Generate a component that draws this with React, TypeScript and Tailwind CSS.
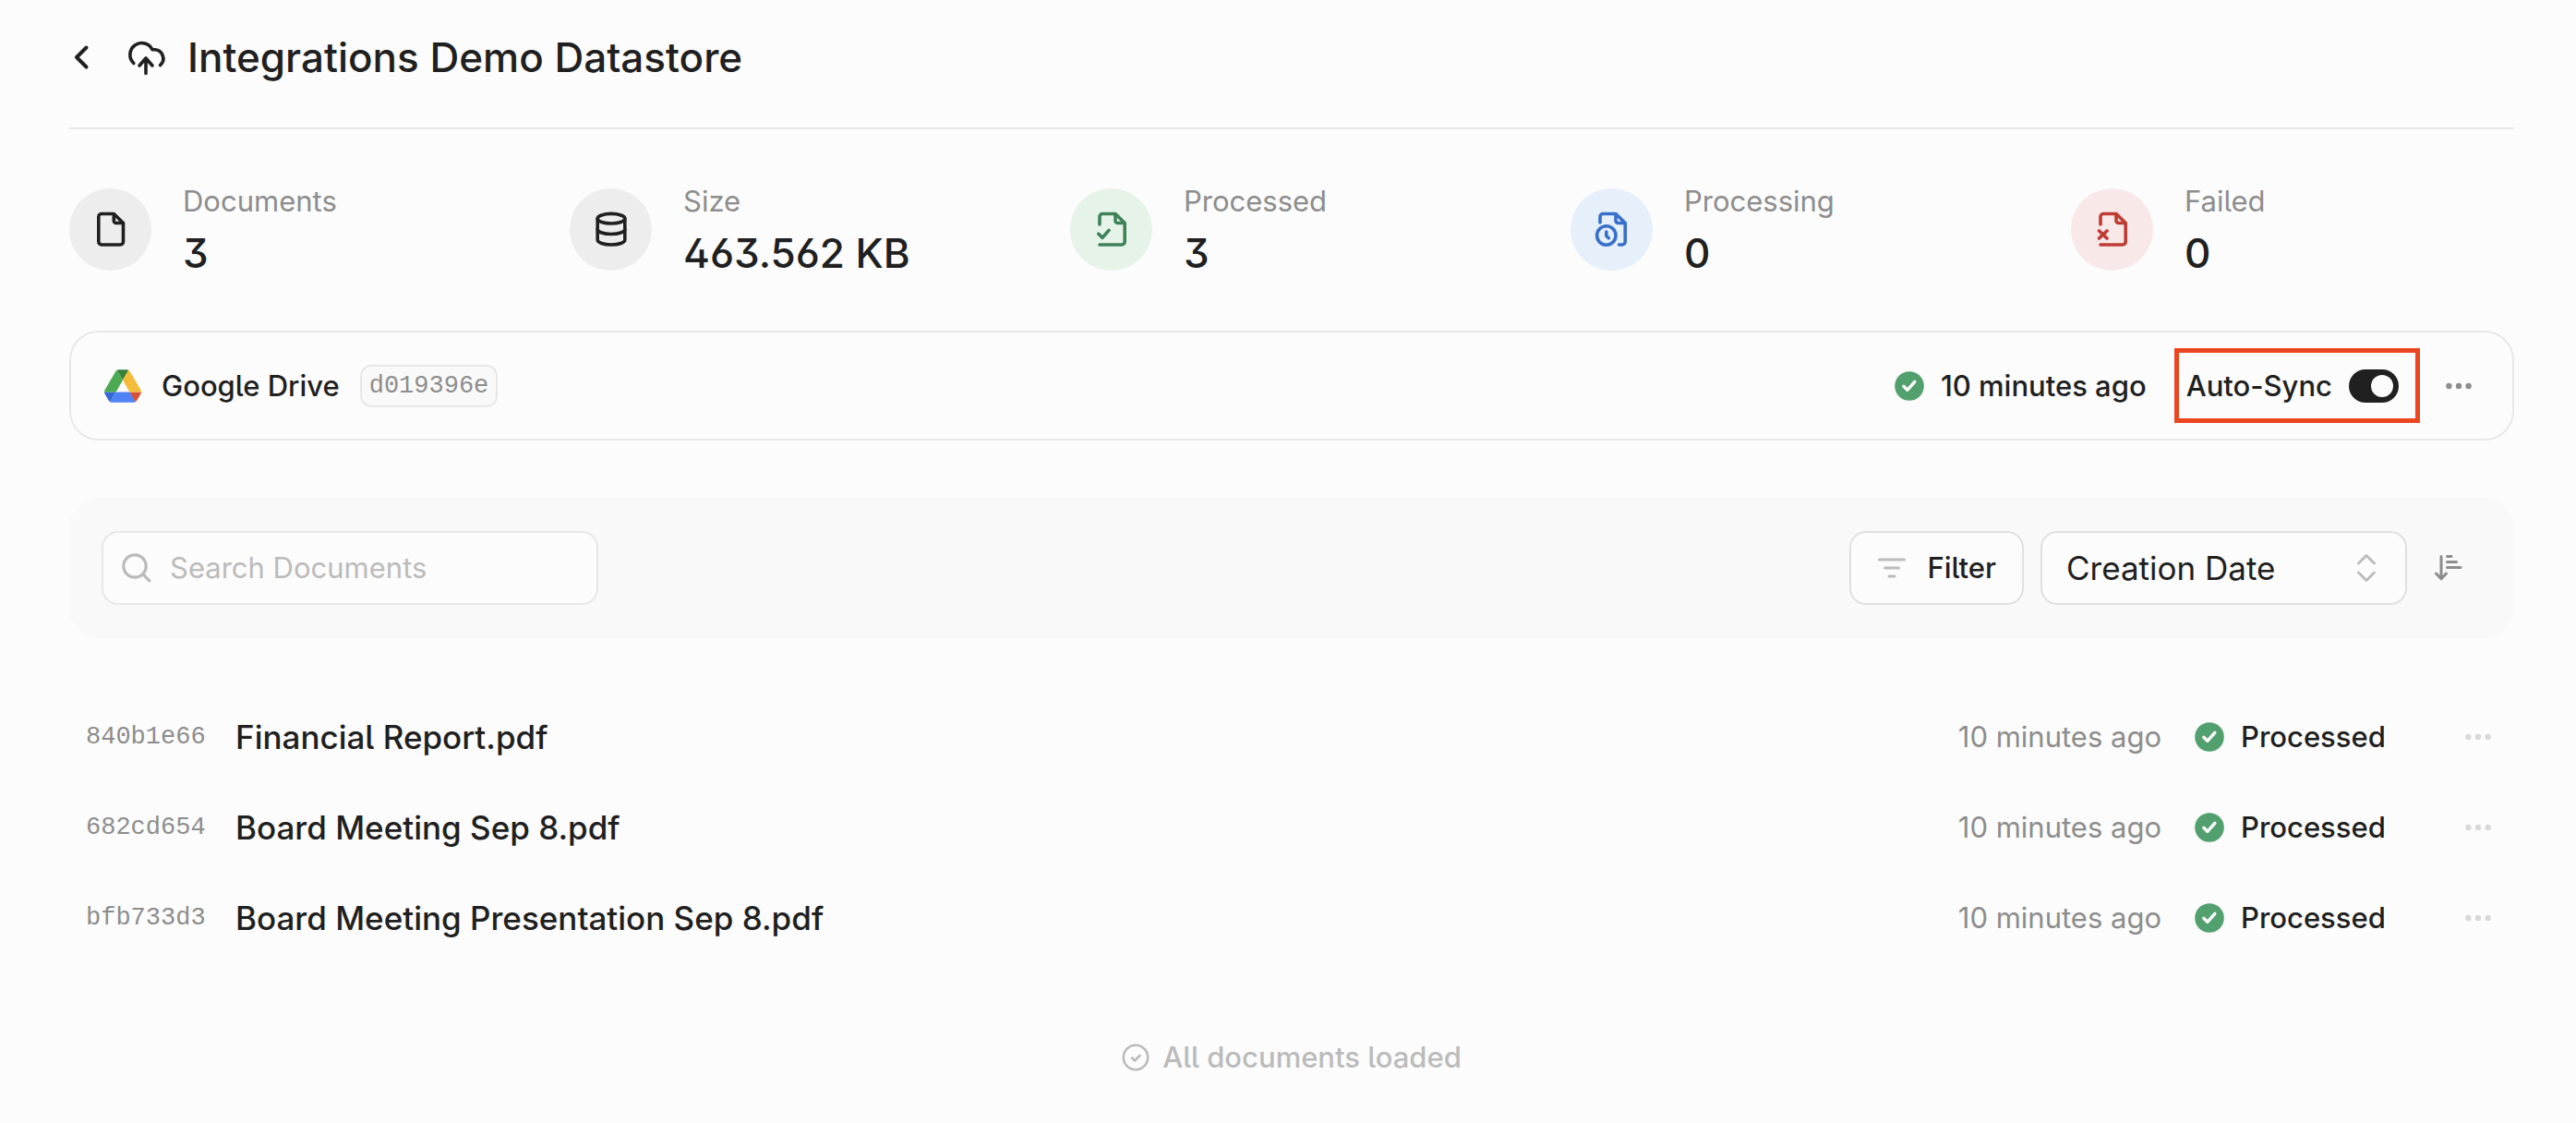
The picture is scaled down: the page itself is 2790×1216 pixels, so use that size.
import React, { useState } from 'react';

type IconProps = { className?: string };

const stats = [
  { name: 'Documents', value: '3', icon: FileIcon, style: 'bg-[#ededed] text-[#202020]' },
  { name: 'Size', value: '463.562 KB', icon: DatabaseIcon, style: 'bg-[#ededed] text-[#202020]' },
  { name: 'Processed', value: '3', icon: FileCheckIcon, style: 'bg-[#e6f3e9] text-[#3f825a]' },
  { name: 'Processing', value: '0', icon: FileClockIcon, style: 'bg-[#e5f0fb] text-[#3a70cc]' },
  { name: 'Failed', value: '0', icon: FileXIcon, style: 'bg-[#f8e8e8] text-[#bf3c35]' },
];

const documents = [
  { id: '840b1e66', name: 'Financial Report.pdf', time: '10 minutes ago', status: 'Processed' },
  { id: '682cd654', name: 'Board Meeting Sep 8.pdf', time: '10 minutes ago', status: 'Processed' },
  { id: 'bfb733d3', name: 'Board Meeting Presentation Sep 8.pdf', time: '10 minutes ago', status: 'Processed' },
];

// Shared wrapper for the 44px outline icons
function Outline({ children }: { children: React.ReactNode }) {
  return (
    <svg
      viewBox="0 0 44 44"
      className="size-11 shrink-0"
      fill="none"
      stroke="currentColor"
      strokeWidth="3.6"
      strokeLinecap="round"
      strokeLinejoin="round"
      aria-hidden="true"
    >
      {children}
    </svg>
  );
}

function FileIcon() {
  return (
    <Outline>
      <path d="M25.3 5.5H12a3.2 3.2 0 0 0-3.2 3.2v27.1A3.2 3.2 0 0 0 12 39h20.300a3.200 3.200 0 0 0 3.200-3.200V15.500z" />
      <path d="M25.300 6v7a2.500 2.500 0 0 0 2.500 2.500h7" />
    </Outline>
  );
}

function DatabaseIcon() {
  return (
    <Outline>
      <ellipse cx="22" cy="10.700" rx="14.800" ry="5.300" />
      <path d="M7.200 10.700v23c0 2.900 6.600 5.300 14.800 5.300s14.800-2.400 14.800-5.300v-23" />
      <path d="M7.200 22.200c0 2.900 6.600 5.300 14.800 5.300s14.800-2.400 14.800-5.300" />
    </Outline>
  );
}

function FileCheckIcon() {
  return (
    <Outline>
      <path d="M9 17V8.700a3.200 3.200 0 0 1 3.200-3.200H26l10.200 10v20.300A3.200 3.200 0 0 1 33 39H9" />
      <path d="M26 6v7a2.500 2.500 0 0 0 2.500 2.500h7" />
      <path d="M7.800 27.200l4.200 4.200 7-8" />
    </Outline>
  );
}

function FileClockIcon() {
  return (
    <Outline>
      <path d="M9 15V8.700a3.200 3.200 0 0 1 3.200-3.200H26l10.200 10v20.300A3.200 3.200 0 0 1 33 39h-3.500" />
      <path d="M26 6v7a2.500 2.500 0 0 0 2.500 2.500h7" />
      <circle cx="15.800" cy="29" r="10.200" />
      <path d="M15.800 25v4.500l2.500 2.300" />
    </Outline>
  );
}

function FileXIcon() {
  return (
    <Outline>
      <path d="M9 17V8.700a3.200 3.200 0 0 1 3.200-3.200H26l10.200 10v20.300A3.200 3.200 0 0 1 33 39H9" />
      <path d="M26 6v7a2.500 2.500 0 0 0 2.500 2.500h7" />
      <path d="M7.500 24l8.500 8M16 24l-8.500 8" />
    </Outline>
  );
}

function CloudUploadIcon() {
  return (
    <Outline>
      <path d="M7.800 28.500A12.700 12.700 0 1 1 28 13.800h1.500a9.600 9.600 0 0 1 7 16.800" />
      <path d="M21 23v16.500M14 31l7-8 7 8" />
    </Outline>
  );
}

function DriveLogo() {
  return (
    <svg viewBox="0 0 87.3 78" className="h-9 w-10 shrink-0" aria-hidden="true">
      <path fill="#3667d6" d="m6.600 66.850 3.850 6.650c.8 1.400 1.950 2.500 3.300 3.300l13.750-23.800h-27.500c0 1.550.4 3.100 1.200 4.500z" />
      <path fill="#4caa53" d="m43.650 25-13.750-23.800c-1.350.8-2.500 1.900-3.300 3.300l-25.400 44a9.060 9.060 0 0 0 -1.200 4.500h27.500z" />
      <path fill="#d8523a" d="m73.550 76.800c1.350-.8 2.500-1.900 3.300-3.300l1.600-2.750 7.650-13.250c.8-1.400 1.200-2.950 1.200-4.500h-27.502l5.852 11.500z" />
      <path fill="#38803a" d="m43.650 25 13.750-23.800c-1.350-.8-2.900-1.200-4.500-1.200h-18.500c-1.600 0-3.150.45-4.500 1.200z" />
      <path fill="#4f82f5" d="m59.800 53h-32.300l-13.750 23.800c1.350.8 2.900 1.200 4.500 1.200h50.800c1.600 0 3.150-.45 4.500-1.200z" />
      <path fill="#f3bc3a" d="m73.400 26.500-12.700-22c-.8-1.400-1.950-2.500-3.300-3.300l-13.750 23.800 16.150 28h27.450c0-1.550-.4-3.100-1.200-4.500z" />
    </svg>
  );
}

function StatusCheck() {
  return (
    <svg viewBox="0 0 32 32" className="size-8 shrink-0" fill="none" aria-hidden="true">
      <circle cx="16" cy="16" r="15.800" fill="#53a06f" />
      <path d="M9.800 16.300l4 4 8-9" stroke="#fcfcfc" strokeWidth="3.400" strokeLinecap="round" strokeLinejoin="round" />
    </svg>
  );
}

function Dots({ className }: IconProps) {
  return (
    <svg viewBox="0 0 28 8" className={className} fill="currentColor" aria-hidden="true">
      <circle cx="3.400" cy="4" r="3.200" />
      <circle cx="14" cy="4" r="3.200" />
      <circle cx="24.600" cy="4" r="3.200" />
    </svg>
  );
}

const App: React.FC = () => {
  const [autoSync, setAutoSync] = useState(true);
  const [search, setSearch] = useState('');
  const [sortBy, setSortBy] = useState('Creation Date');

  return (
    <main className="min-h-screen bg-[#fcfcfc] pr-[67px] pl-[75px] pb-12 font-['Inter',sans-serif] text-[31px] leading-[48px] text-[#202020] [font-feature-settings:'cv02','cv03','cv04','cv05','cv09']">
      <header className="flex items-center border-b-2 border-[#e8e8e8] pt-[34px] pb-12">
        <button type="button" aria-label="Back" className="mr-[34px]">
          <svg viewBox="0 0 28 28" className="size-7" fill="none" stroke="currentColor" strokeWidth="4" strokeLinecap="round" strokeLinejoin="round">
            <path d="M18.500 3.500L8 14l10.500 10.500" />
          </svg>
        </button>
        <CloudUploadIcon />
        <h1 className="ml-[22px] text-[44px] leading-[56px] font-medium">Integrations Demo Datastore</h1>
      </header>

      <dl className="mt-[54px] grid grid-cols-5 gap-[62px]">
        {stats.map((stat) => (
          <div key={stat.name} className="flex items-center gap-[34px]">
            <div className={`flex size-[89px] shrink-0 items-center justify-center rounded-full ${stat.style}`}>
              <stat.icon />
            </div>
            <div className="flex flex-col gap-1">
              <dt className="text-[#8d8d8d]">{stat.name}</dt>
              <dd className="text-[44px] leading-[56px] font-medium">{stat.value}</dd>
            </div>
          </div>
        ))}
      </dl>

      {/* Connected source */}
      <section className="mt-14 flex items-center rounded-[32px] border-2 border-[#e8e8e8] pr-[34px] pl-9 py-[17px] font-medium">
        <DriveLogo />
        <span className="ml-[22px]">Google Drive</span>
        <code className="ml-[22px] rounded-xl border-2 border-[#e8e8e8] bg-[#f9f9f9] px-2 font-['Liberation_Mono',monospace] text-[27px] leading-[42px] font-normal text-[#8d8d8d]">
          d019396e
        </code>
        <div className="ml-auto flex items-center gap-[18px]">
          <StatusCheck />
          <span>10 minutes ago</span>
        </div>
        <label className="ml-[30px] flex h-[81px] items-center gap-[18px] border-[5px] border-[#ec4620] pr-[18px] pl-2">
          Auto-Sync
          <input
            type="checkbox"
            role="switch"
            checked={autoSync}
            onChange={(e) => setAutoSync(e.target.checked)}
            className="h-9 w-[54px] appearance-none rounded-full bg-[#c8c8c8] p-[6px] before:block before:size-6 before:rounded-full before:bg-[#fcfcfc] checked:bg-[#202020] checked:before:translate-x-[18px]"
          />
        </label>
        <button type="button" aria-label="Source options" className="ml-[18px] flex h-12 w-12 items-center justify-center text-[#8d8d8d]">
          <Dots className="h-2 w-7" />
        </button>
      </section>

      {/* Search and sorting */}
      <section className="mt-[62px] flex items-center gap-[18px] rounded-[32px] bg-[#f9f9f9] py-9 pr-[38px] pl-[35px]">
        <label className="flex h-20 w-[538px] items-center gap-5 rounded-[18px] border-2 border-[#e8e8e8] bg-[#fcfcfc] px-5 text-[#bbbbbb]">
          <svg viewBox="0 0 32 32" className="size-8 shrink-0" fill="none" stroke="currentColor" strokeWidth="3.2" strokeLinecap="round" aria-hidden="true">
            <circle cx="14" cy="14" r="12.200" />
            <path d="M23 23l6.800 6.800" />
          </svg>
          <input
            type="text"
            aria-label="Search Documents"
            placeholder="Search Documents"
            value={search}
            onChange={(e) => setSearch(e.target.value)}
            className="min-w-0 flex-1 bg-transparent text-[#202020] outline-none placeholder:text-[#bbbbbb]"
          />
        </label>
        <button type="button" className="ml-auto flex h-20 items-center gap-[22px] rounded-[18px] border-2 border-[#e0e0e0] bg-[#fcfcfc] px-[28px] font-medium">
          <svg viewBox="0 0 32 32" className="size-8 text-[#bbbbbb]" fill="none" stroke="currentColor" strokeWidth="3" strokeLinecap="round" aria-hidden="true">
            <path d="M2.500 7h27M8.500 16h15M13 25h6" />
          </svg>
          Filter
        </button>
        <div className="relative">
          <select
            aria-label="Sort by"
            value={sortBy}
            onChange={(e) => setSortBy(e.target.value)}
            className="h-20 w-[397px] appearance-none rounded-[18px] border-2 border-[#e0e0e0] bg-[#fcfcfc] pl-[26px] text-[35px]"
          >
            <option>Creation Date</option>
            <option>Name</option>
          </select>
          <svg viewBox="0 0 24 32" className="pointer-events-none absolute top-6 right-8 h-8 w-6 text-[#bbbbbb]" fill="none" stroke="currentColor" strokeWidth="2.800" strokeLinecap="round" strokeLinejoin="round" aria-hidden="true">
            <path d="M3.500 11L12 2.500l8.500 8.500M3.500 21l8.500 8.500L20.500 21" />
          </svg>
        </div>
        <button type="button" aria-label="Sort direction" className="flex h-20 w-[60px] items-center justify-center text-[#8d8d8d]">
          <svg viewBox="0 0 36 36" className="size-9" fill="none" stroke="currentColor" strokeWidth="3" strokeLinecap="round" strokeLinejoin="round" aria-hidden="true">
            <path d="M7 5.500v24M1.500 24L7 29.800l5.500-5.800M13.500 5.500h4.500M13.500 11.500h10M13.500 17.500h14.500" />
          </svg>
        </button>
      </section>

      <table className="mt-[58px] w-full text-left">
        <tbody>
          {documents.map((doc) => (
            <tr key={doc.id} className="h-[98px]">
              <td className="w-[180px] pl-[18px] font-['Liberation_Mono',monospace] text-[27px] text-[#8d8d8d]">{doc.id}</td>
              <td className="text-[35px] font-medium">{doc.name}</td>
              <td className="text-right text-[#8d8d8d]">{doc.time}</td>
              <td className="w-[322px] pl-9">
                <div className="flex items-center gap-[18px] font-medium">
                  <StatusCheck />
                  {doc.status}
                </div>
              </td>
              <td className="w-[60px] pr-[18px]">
                <button type="button" aria-label={`Options for ${doc.name}`} className="flex h-12 w-[42px] items-center justify-center text-[#d9d9d9]">
                  <Dots className="h-2 w-7" />
                </button>
              </td>
            </tr>
          ))}
        </tbody>
      </table>

      <p className="mt-[78px] flex items-center justify-center gap-[14px] font-medium text-[#bbbbbb]">
        <svg viewBox="0 0 30 30" className="size-[30px]" fill="none" stroke="currentColor" strokeWidth="2.600" strokeLinecap="round" strokeLinejoin="round" aria-hidden="true">
          <circle cx="15" cy="15" r="13.200" />
          <path d="M11 15.500l3 3 5.500-5.500" />
        </svg>
        All documents loaded
      </p>
    </main>
  );
};

export default App;
